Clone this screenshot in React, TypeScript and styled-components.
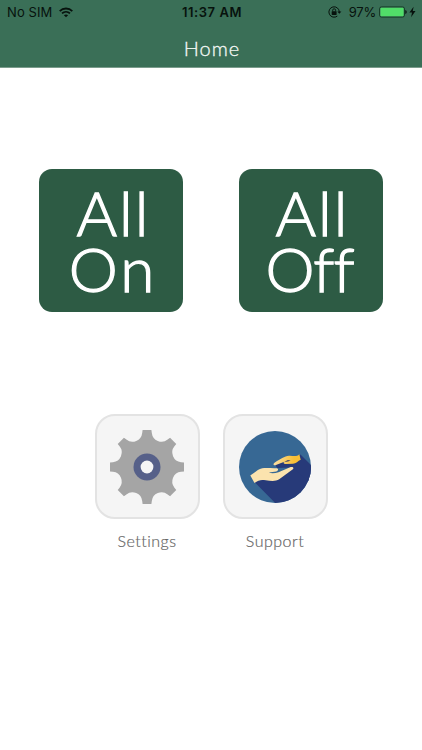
import React from "react";
import styled, { createGlobalStyle } from "styled-components";

const GlobalStyle = createGlobalStyle`
  * {
    box-sizing: border-box;
  }

  body {
    margin: 0;
    background: #fff;
  }
`;

const Screen = styled.div`
  width: 422px;
  height: 750px;
  overflow: hidden;
  background: #fff;
  font-family: Lato, "Open Sans", sans-serif;
`;

const Header = styled.header`
  height: 68px;
  background: #3a6f57;
  border-bottom: 1px solid #7b9c8c;
`;

const StatusBar = styled.div`
  display: grid;
  grid-template-columns: 1fr auto 1fr;
  align-items: center;
  height: 24px;
  padding: 0 6px 0 7px;
  color: #07120d;
  font-family: Inter, "Liberation Sans", sans-serif;
  font-size: 13px;
  white-space: nowrap;
`;

const Carrier = styled.div`
  display: flex;
  align-items: center;
  gap: 7px;
  letter-spacing: 0.1px;
`;

const Clock = styled.div`
  padding-left: 1px;
  font-weight: 600;
  letter-spacing: 0.55px;
`;

const Power = styled.div`
  display: flex;
  align-items: center;
  justify-content: flex-end;
`;

const Percent = styled.span`
  margin: 0 3px 0 7px;
  letter-spacing: -0.25px;
`;

const Title = styled.h1`
  margin: 0;
  padding-left: 2px;
  color: #f4f8f5;
  font-size: 20px;
  font-weight: 300;
  line-height: 49px;
  letter-spacing: 1px;
  text-align: center;
  -webkit-text-stroke: 0.3px #f4f8f5;
`;

const Switches = styled.div`
  display: flex;
  justify-content: center;
  gap: 56px;
  padding-top: 101px;
`;

const SwitchButton = styled.button`
  width: 144px;
  height: 143px;
  padding: 15px 0 0;
  border: 0;
  border-radius: 13px;
  background: #2d5b44;
  color: #fff;
  font-family: inherit;
  font-size: 62px;
  font-weight: 300;
  line-height: 56px;
  display: flex;
  flex-direction: column;
  align-items: center;
  -webkit-text-stroke: 1.3px #fff;
`;

const Word = styled.span<{ $spacing?: number; $shift?: number }>`
  height: 56px;
  letter-spacing: ${({ $spacing = 0 }) => $spacing}px;
  margin-left: ${({ $shift = 0 }) => $shift}px;
  font-variant-ligatures: none;
`;

const Links = styled.nav`
  display: flex;
  justify-content: center;
  gap: 23px;
  padding-top: 102px;
`;

const LinkItem = styled.div`
  display: flex;
  flex-direction: column;
  align-items: center;
`;

const IconTile = styled.div`
  display: flex;
  align-items: center;
  justify-content: center;
  width: 105px;
  height: 105px;
  border: 2px solid #e3e3e3;
  border-radius: 20px;
  background: #f5f5f5;
`;

const Label = styled.span`
  margin-top: 10px;
  color: #666;
  font-size: 16px;
  font-weight: 300;
  line-height: 23px;
  letter-spacing: 0.5px;
  -webkit-text-stroke: 0.2px #666;
`;

const WifiIcon = () => (
  <svg width="14" height="11" viewBox="0 0 14 11" fill="none" stroke="#07120d">
    <path d="M0.7 4.1C4.2 0.6 9.8 0.6 13.3 4.1" strokeWidth="1.8" />
    <path d="M3 6.4C5.3 4.2 8.7 4.2 11 6.4" strokeWidth="1.7" />
    <path d="M7 10.3L4.9 8.2C6.1 7.1 7.9 7.1 9.1 8.2Z" fill="#07120d" stroke="none" />
  </svg>
);

const LockIcon = () => (
  <svg width="14" height="12" viewBox="0 0 14 12" fill="none" stroke="#07120d">
    <path d="M11.3 6A5.2 5.2 0 1 0 9.3 10.1" strokeWidth="1" />
    <path d="M9.3 5.4H13.4L11.3 7.8Z" fill="#07120d" stroke="none" />
    <rect x="3.7" y="5.2" width="4.9" height="3.7" rx="0.4" fill="#07120d" stroke="none" />
    <path d="M4.7 5.4V4.2A1.45 1.45 0 0 1 7.6 4.2V5.4" strokeWidth="0.9" />
  </svg>
);

const BatteryIcon = () => (
  <svg width="28" height="12" viewBox="0 0 28 12">
    <rect x="0.5" y="0.9" width="25" height="10.2" rx="2" fill="none" stroke="#173d29" />
    <rect x="1.4" y="1.8" width="23.2" height="8.4" rx="1" fill="#51dd69" />
    <path d="M26.3 4A2.1 2.1 0 0 1 26.3 8Z" fill="#07120d" />
  </svg>
);

const BoltIcon = () => (
  <svg width="9" height="12" viewBox="0 0 9 12">
    <path d="M6.6 0.8L2.4 6.6H5L4.1 11.2L8.5 5.1H5.8Z" fill="#07120d" />
  </svg>
);

// Each tooth is a flat edge, followed by a round notch up to the next one
const gearPath = () => {
  const at = (x: number, y: number, turn: number) => {
    const a = (turn * Math.PI) / 4;
    const px = x * Math.cos(a) - y * Math.sin(a);
    const py = x * Math.sin(a) + y * Math.cos(a);
    return `${px.toFixed(2)} ${py.toFixed(2)}`;
  };

  return [0, 1, 2, 3, 4, 5, 6, 7]
    .map(
      (i) =>
        `${i ? "L" : "M"}${at(-4.4, -37, i)}L${at(4.4, -37, i)}L${at(4.8, -34, i)}` +
        `A9.8 9.8 0 0 0 ${at(-4.8, -34, i + 1)}L${at(-4.4, -37, i + 1)}`
    )
    .join("");
};

const GearIcon = () => (
  <svg width="76" height="76" viewBox="-38 -38 76 76">
    <path d={`${gearPath()}Z`} fill="#a5a5a5" />
    <circle r="13.5" fill="#566089" />
    <circle r="6.4" fill="#f5f5f5" />
  </svg>
);

const HandsIcon = () => (
  <svg width="72" height="72" viewBox="0 0 72 72">
    <defs>
      <clipPath id="disc">
        <circle cx="36" cy="36" r="36" />
      </clipPath>
      <linearGradient id="smallHand">
        <stop offset="0.1" stopColor="#fbdc98" />
        <stop offset="0.75" stopColor="#f8bf35" />
      </linearGradient>
    </defs>
    <g clipPath="url(#disc)">
      <rect width="72" height="72" fill="#376894" />
      <path d="M15.5 51L36 45L54 36.5L38 37L36 32.5L50 31L60 24L82 44V82H46Z" fill="#273a79" />
      <path d="M61.5 23.5L82 44V60L50 34L38 36L36 33L48 31Z" fill="#273a79" />
    </g>
    <path
      d="M11.3 44.6C15 42.5 18.6 38 23.2 37.3C27.5 36.8 32.5 37.4 37.5 37.2C39.6 37.2 39.5 40 37.3 40.4L29.8 41.4C32.5 42.7 36.2 42.2 39.5 41.2L51.7 36.1C54 35.2 55.4 37.2 53.5 38.6L40.2 48.3C36.6 50.7 31.4 50 26.8 49.2C21.7 48.5 19.3 49 15.5 52Z"
      fill="#fbe3ae"
    />
    <path
      d="M60.3 23.2C57.5 26.2 54.3 24.6 50 24.8C45.5 25.1 41.2 28.3 36.2 31.2C33.6 32.8 34.3 35 37 34.1L45.2 30.8C44 32 44.8 33.1 46.4 33.1L54 32.8C57 32.6 59 30 61.7 28.8Z"
      fill="url(#smallHand)"
    />
    <path d="M45 31.2L48.6 28.9L51.6 28.9L49.3 30.4Z" fill="#5a5768" />
  </svg>
);

const App = () => (
  <>
    <GlobalStyle />
    <Screen>
      <Header>
        <StatusBar>
          <Carrier>
            No SIM
            <WifiIcon />
          </Carrier>
          <Clock>11:37 AM</Clock>
          <Power>
            <LockIcon />
            <Percent>97%</Percent>
            <BatteryIcon />
            <BoltIcon />
          </Power>
        </StatusBar>
        <Title>Home</Title>
      </Header>
      <Switches>
        <SwitchButton>
          <Word $spacing={2} $shift={5}>All</Word>
          <Word $spacing={3} $shift={4}>On</Word>
        </SwitchButton>
        <SwitchButton>
          <Word $spacing={2} $shift={3}>All</Word>
          <Word $spacing={-1} $shift={-3}>Off</Word>
        </SwitchButton>
      </Switches>
      <Links>
        <LinkItem>
          <IconTile>
            <GearIcon />
          </IconTile>
          <Label>Settings</Label>
        </LinkItem>
        <LinkItem>
          <IconTile>
            <HandsIcon />
          </IconTile>
          <Label>Support</Label>
        </LinkItem>
      </Links>
    </Screen>
  </>
);

export default App;
